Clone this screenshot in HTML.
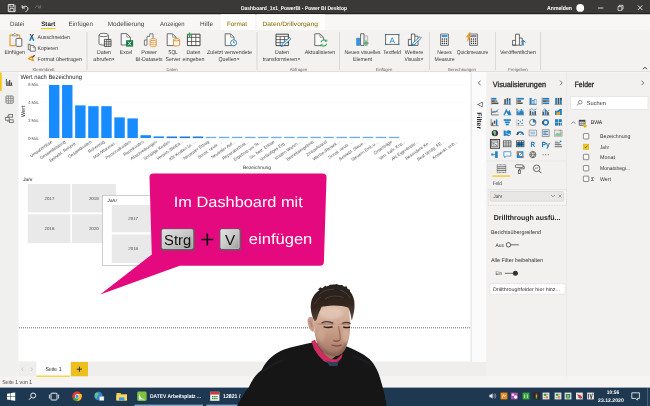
<!DOCTYPE html>
<html lang="de">
<head>
<meta charset="utf-8">
<title>Dashboard_1x1_PowerBI - Power BI Desktop</title>
<style>
html,body{margin:0;padding:0;background:#fff;overflow:hidden}
#screen{position:relative;width:650px;height:406px;overflow:hidden;background:#fff}
#screen svg{position:absolute;left:0;top:0;display:block;font-family:"Liberation Sans", sans-serif;filter:blur(0.35px)}
</style>
</head>
<body>
<div id="screen">
<svg width="650" height="406" viewBox="0 0 650 406" text-rendering="geometricPrecision">
<defs>
<linearGradient id="tb" x1="0" y1="0" x2="0" y2="1"><stop offset="0" stop-color="#3d3c3a"/><stop offset="1" stop-color="#242322"/></linearGradient>
<linearGradient id="key" x1="0" y1="0" x2="1" y2="1"><stop offset="0" stop-color="#e4e4e4"/><stop offset="0.55" stop-color="#c6c6c6"/><stop offset="1" stop-color="#9c9c9c"/></linearGradient>
</defs>
<rect x="0.00" y="0.00" width="650.00" height="406.00" fill="#ffffff" />
<rect x="0.00" y="0.00" width="650.00" height="14.30" fill="#3a3938" />
<rect x="0.00" y="13.30" width="650.00" height="1.10" fill="#161616" />
<rect x="0.00" y="14.40" width="650.00" height="15.60" fill="#f8f7f6" />
<rect x="0.00" y="30.00" width="650.00" height="42.00" fill="#f3f2f1" />
<rect x="221.00" y="14.30" width="34.00" height="15.70" fill="#fdfdfb" />
<rect x="257.00" y="14.30" width="68.00" height="15.70" fill="#fdfdfb" />
<line x1="0.00" y1="71.60" x2="650.00" y2="71.60" stroke="#d4d3d2" stroke-width="0.7" />
<rect x="0.00" y="72.30" width="18.50" height="315.00" fill="#f0f0ef" />
<rect x="0.00" y="72.50" width="1.70" height="18.50" fill="#f2c811" />
<rect x="18.50" y="361.50" width="468.00" height="15.30" fill="#efeeed" />
<rect x="0.00" y="376.50" width="650.00" height="11.20" fill="#f5f4f3" />
<rect x="470.60" y="72.30" width="1.20" height="289.50" fill="#e3e2e1" />
<rect x="471.80" y="72.30" width="14.40" height="289.50" fill="#fbfbfb" />
<rect x="486.20" y="72.30" width="80.00" height="304.20" fill="#f2f1f0" />
<rect x="566.20" y="72.30" width="1.40" height="304.20" fill="#e6e5e4" />
<rect x="567.60" y="72.30" width="82.40" height="304.20" fill="#f2f1f0" />
<rect x="0.00" y="387.60" width="650.00" height="18.40" fill="#1d3850" />
<g fill="none" stroke="#f2f2f2" stroke-width="0.8">
<path d="M8.300 4.500h5.700l1.100 1.100v6h-6.800z" stroke-width="0.900"/><path d="M10 4.600v2.300h3.600v-2.300M10 11.200v-2.600h3.800v2.600"/>
<path d="M22.200 5.300v2.700h2.700" stroke-width="1"/><path d="M22.600 7.600c1.600-2 4.800-1.800 5.300 0.600c0.300 1.600-0.800 2.800-2.400 3.400" stroke-width="1"/>
</g>
<g fill="none" stroke="#777" stroke-width="0.8"><path d="M40.6 5.2v2.6h-2.6"/><path d="M40.4 7.6c-1.2-2.3-4.6-2.2-5 0.3"/></g>
<text x="241.00" y="9.69" font-size="5.6" fill="#ffffff" font-weight="bold" textLength="106.00" lengthAdjust="spacingAndGlyphs" >Dashboard_1x1_PowerBI - Power BI Desktop</text>
<text x="547.00" y="9.96" font-size="5.8" fill="#ffffff" font-weight="bold" textLength="25.00" lengthAdjust="spacingAndGlyphs" >Anmelden</text>
<circle cx="580.2" cy="7.9" r="3.9" fill="#ffffff"/>
<line x1="598.00" y1="8.00" x2="603.40" y2="8.00" stroke="#e8e8e8" stroke-width="0.9" />
<path d="M618 6.6h3.8v3.8h-3.8zM619.2 6.4v-1.1h3.8v3.8h-1.1" fill="none" stroke="#e8e8e8" stroke-width="0.8"/>
<path d="M637.8 5.4l4.6 4.6M642.4 5.4l-4.6 4.6" stroke="#f0f0f0" stroke-width="0.9" fill="none"/>
<text x="10.00" y="25.84" font-size="6.3" fill="#444" textLength="14.30" lengthAdjust="spacingAndGlyphs" >Datei</text>
<text x="41.20" y="25.84" font-size="6.3" fill="#222" font-weight="bold" textLength="14.20" lengthAdjust="spacingAndGlyphs" >Start</text>
<text x="68.60" y="25.84" font-size="6.3" fill="#444" textLength="24.40" lengthAdjust="spacingAndGlyphs" >Einfügen</text>
<text x="107.80" y="25.84" font-size="6.3" fill="#444" textLength="36.50" lengthAdjust="spacingAndGlyphs" >Modellierung</text>
<text x="160.00" y="25.84" font-size="6.3" fill="#444" textLength="24.60" lengthAdjust="spacingAndGlyphs" >Anzeigen</text>
<text x="200.00" y="25.84" font-size="6.3" fill="#444" textLength="13.00" lengthAdjust="spacingAndGlyphs" >Hilfe</text>
<text x="227.00" y="25.84" font-size="6.3" fill="#8a6a00" textLength="20.00" lengthAdjust="spacingAndGlyphs" >Format</text>
<text x="262.50" y="25.84" font-size="6.3" fill="#8a6a00" textLength="55.50" lengthAdjust="spacingAndGlyphs" >Daten/Drillvorgang</text>
<rect x="41.00" y="28.00" width="14.60" height="1.10" fill="#f2c811" />
<line x1="87.00" y1="32.00" x2="87.00" y2="70.00" stroke="#cfcecd" stroke-width="0.7" />
<line x1="257.00" y1="32.00" x2="257.00" y2="70.00" stroke="#cfcecd" stroke-width="0.7" />
<line x1="339.50" y1="32.00" x2="339.50" y2="70.00" stroke="#cfcecd" stroke-width="0.7" />
<line x1="429.50" y1="32.00" x2="429.50" y2="70.00" stroke="#cfcecd" stroke-width="0.7" />
<line x1="495.50" y1="32.00" x2="495.50" y2="70.00" stroke="#cfcecd" stroke-width="0.7" />
<line x1="540.60" y1="32.00" x2="540.60" y2="70.00" stroke="#cfcecd" stroke-width="0.7" />
<text x="43.50" y="70.56" font-size="4.4" fill="#666" text-anchor="middle" textLength="22.00" lengthAdjust="spacingAndGlyphs" >Klemmbrett</text>
<text x="172.00" y="70.56" font-size="4.4" fill="#666" text-anchor="middle" textLength="11.00" lengthAdjust="spacingAndGlyphs" >Daten</text>
<text x="298.50" y="70.56" font-size="4.4" fill="#666" text-anchor="middle" textLength="17.50" lengthAdjust="spacingAndGlyphs" >Abfragen</text>
<text x="384.00" y="70.56" font-size="4.4" fill="#666" text-anchor="middle" textLength="16.50" lengthAdjust="spacingAndGlyphs" >Einfügen</text>
<text x="462.00" y="70.56" font-size="4.4" fill="#666" text-anchor="middle" textLength="28.00" lengthAdjust="spacingAndGlyphs" >Berechnungen</text>
<text x="518.00" y="70.56" font-size="4.4" fill="#666" text-anchor="middle" textLength="19.50" lengthAdjust="spacingAndGlyphs" >Freigeben</text>
<text x="14.70" y="53.99" font-size="5.6" fill="#3a3a3a" text-anchor="middle" textLength="20.50" lengthAdjust="spacingAndGlyphs" >Einfügen</text>
<text x="37.50" y="39.19" font-size="5.6" fill="#3a3a3a" textLength="32.50" lengthAdjust="spacingAndGlyphs" >Ausschneiden</text>
<text x="37.50" y="50.19" font-size="5.6" fill="#3a3a3a" textLength="20.50" lengthAdjust="spacingAndGlyphs" >Kopieren</text>
<text x="37.50" y="61.19" font-size="5.6" fill="#3a3a3a" textLength="44.50" lengthAdjust="spacingAndGlyphs" >Format übertragen</text>
<text x="104.00" y="53.79" font-size="5.6" fill="#3a3a3a" text-anchor="middle" textLength="14.00" lengthAdjust="spacingAndGlyphs" >Daten</text>
<text x="102.60" y="60.99" font-size="5.6" fill="#3a3a3a" text-anchor="middle" textLength="18.50" lengthAdjust="spacingAndGlyphs" >abrufen</text>
<text x="126.00" y="53.79" font-size="5.6" fill="#3a3a3a" text-anchor="middle" textLength="12.50" lengthAdjust="spacingAndGlyphs" >Excel</text>
<text x="149.00" y="53.79" font-size="5.6" fill="#3a3a3a" text-anchor="middle" textLength="15.50" lengthAdjust="spacingAndGlyphs" >Power</text>
<text x="149.00" y="60.99" font-size="5.6" fill="#3a3a3a" text-anchor="middle" textLength="27.00" lengthAdjust="spacingAndGlyphs" >BI-Datasets</text>
<text x="173.00" y="53.79" font-size="5.6" fill="#3a3a3a" text-anchor="middle" textLength="9.50" lengthAdjust="spacingAndGlyphs" >SQL</text>
<text x="173.00" y="60.99" font-size="5.6" fill="#3a3a3a" text-anchor="middle" textLength="15.00" lengthAdjust="spacingAndGlyphs" >Server</text>
<text x="193.50" y="53.79" font-size="5.6" fill="#3a3a3a" text-anchor="middle" textLength="14.00" lengthAdjust="spacingAndGlyphs" >Daten</text>
<text x="193.50" y="60.99" font-size="5.6" fill="#3a3a3a" text-anchor="middle" textLength="22.00" lengthAdjust="spacingAndGlyphs" >eingeben</text>
<text x="229.50" y="53.79" font-size="5.6" fill="#3a3a3a" text-anchor="middle" textLength="45.00" lengthAdjust="spacingAndGlyphs" >Zuletzt verwendete</text>
<text x="227.50" y="60.99" font-size="5.6" fill="#3a3a3a" text-anchor="middle" textLength="18.00" lengthAdjust="spacingAndGlyphs" >Quellen</text>
<text x="282.00" y="53.79" font-size="5.6" fill="#3a3a3a" text-anchor="middle" textLength="14.00" lengthAdjust="spacingAndGlyphs" >Daten</text>
<text x="280.00" y="60.99" font-size="5.6" fill="#3a3a3a" text-anchor="middle" textLength="34.50" lengthAdjust="spacingAndGlyphs" >transformieren</text>
<text x="320.00" y="53.79" font-size="5.6" fill="#3a3a3a" text-anchor="middle" textLength="30.50" lengthAdjust="spacingAndGlyphs" >Aktualisieren</text>
<text x="362.60" y="53.79" font-size="5.6" fill="#3a3a3a" text-anchor="middle" textLength="36.00" lengthAdjust="spacingAndGlyphs" >Neues visuelles</text>
<text x="362.50" y="60.99" font-size="5.6" fill="#3a3a3a" text-anchor="middle" textLength="19.00" lengthAdjust="spacingAndGlyphs" >Element</text>
<text x="392.00" y="53.79" font-size="5.6" fill="#3a3a3a" text-anchor="middle" textLength="18.00" lengthAdjust="spacingAndGlyphs" >Textfeld</text>
<text x="414.00" y="53.79" font-size="5.6" fill="#3a3a3a" text-anchor="middle" textLength="18.30" lengthAdjust="spacingAndGlyphs" >Weitere</text>
<text x="412.40" y="60.99" font-size="5.6" fill="#3a3a3a" text-anchor="middle" textLength="16.00" lengthAdjust="spacingAndGlyphs" >Visuals</text>
<text x="444.40" y="53.79" font-size="5.6" fill="#3a3a3a" text-anchor="middle" textLength="14.50" lengthAdjust="spacingAndGlyphs" >Neues</text>
<text x="444.60" y="60.99" font-size="5.6" fill="#3a3a3a" text-anchor="middle" textLength="20.00" lengthAdjust="spacingAndGlyphs" >Measure</text>
<text x="472.50" y="53.79" font-size="5.6" fill="#3a3a3a" text-anchor="middle" textLength="31.50" lengthAdjust="spacingAndGlyphs" >Quickmeasure</text>
<text x="518.00" y="53.79" font-size="5.6" fill="#3a3a3a" text-anchor="middle" textLength="36.00" lengthAdjust="spacingAndGlyphs" >Veröffentlichen</text>
<path d="M111.9 58.6h2.6l-1.3 1.5z" fill="#333"/>
<path d="M236.89999999999998 58.6h2.6l-1.3 1.5z" fill="#333"/>
<path d="M297.7 58.6h2.6l-1.3 1.5z" fill="#333"/>
<path d="M420.7 58.6h2.6l-1.3 1.5z" fill="#333"/>
<path d="M643 69.2l2-2l2 2" fill="none" stroke="#222" stroke-width="0.9"/>
<g fill="none" stroke-width="0.9" stroke-linejoin="round">
<path d="M12.6 35.2h-2.6v10.5h5.6M17.2 35.2h2.4v2.6" stroke="#e8a126" stroke-width="1.2"/>
<path d="M12.4 35.8v-1.3h1.3l1.2-1.3l1.2 1.3h1.4v1.3z" stroke="#777" fill="#f4f4f4" stroke-width="0.7"/>
<rect x="16" y="38.3" width="5.8" height="8" rx="0.8" stroke="#555" fill="#fdfdfd"/>
<path d="M30.100 34l2.400 4M33.400 34l-2.400 4" stroke="#2a2a2a" stroke-width="1"/>
<path d="M31.200 37.600l-1.200 2.600M32.300 37.600l1.200 2.600" stroke="#1e7fc4" stroke-width="1.500" stroke-linecap="round"/>
<path d="M30.2 45.6v-1.4h-1.9v5.6h1.9" stroke="#5c5c5c" stroke-width="0.8"/><path d="M30.3 45.4h3l2 2v3.8h-5z" stroke="#5c5c5c" fill="#fafafa" stroke-width="0.8"/><path d="M33.2 45.6v2h2" stroke="#5c5c5c" stroke-width="0.6"/>
<path d="M28.4 58.8l3.6-2.6l1.4 4.6z" stroke="#e8971e" stroke-width="1.1" fill="#f7d9a6"/><path d="M32.6 57.4l2-2.2" stroke="#333" stroke-width="1.2"/>
<path d="M99 35v8.6c0 2 9.4 2 9.4 0v-8.600" stroke="#5c5c5c" fill="#fbfbfb"/><ellipse cx="103.7" cy="35" rx="4.7" ry="1.7" stroke="#5c5c5c" fill="#fbfbfb"/>
<rect x="104.4" y="39.4" width="6.6" height="7" fill="#f4f4f4" stroke="#333" stroke-width="0.8"/><path d="M106.6 39.4v7M108.8 39.4v7M104.4 41.6h6.6M104.4 44h6.6" stroke="#333" stroke-width="0.6"/>
<path d="M121.2 33.6h5.6l3.600 3.6v7.800h-9.200z" stroke="#5c5c5c" fill="#fbfbfb"/><path d="M126.8 33.8v3.400h3.400" stroke="#5c5c5c" stroke-width="0.6"/>
<rect x="126.100" y="40.200" width="7" height="6.400" fill="#107c41" stroke="none"/><path d="M128 41.600l3.200 3.800M131.200 41.600l-3.200 3.800" stroke="#fff" stroke-width="0.9"/>
<path d="M144.4 45.200v-5.200h2.600v5.200zM147 40v-3.600h2.800v-2.600h3.200v4.600" stroke="#5c5c5c" stroke-width="0.8" fill="#fbfbfb"/>
<path d="M150.200 39.600v6c0 1.300 6 1.300 6 0v-6" stroke="#d88a2a" fill="#fff6e8" stroke-width="0.8"/><ellipse cx="153.200" cy="39.600" rx="3" ry="1" stroke="#d88a2a" fill="#fff6e8" stroke-width="0.8"/><path d="M150.200 41.800c0 1.200 6 1.200 6 0M150.200 43.800c0 1.200 6 1.200 6 0" stroke="#d88a2a" stroke-width="0.7"/>
<path d="M167.200 33.800h5.400l3.400 3.400v8.400h-8.800z" stroke="#5c5c5c" fill="#fbfbfb"/><path d="M172.600 34v3.200h3.200" stroke="#5c5c5c" stroke-width="0.6"/>
<path d="M173.400 39.800v5.200c0 1.300 6.200 1.300 6.200 0v-5.200" stroke="#d88a2a" fill="#fff6e8" stroke-width="0.9"/><ellipse cx="176.500" cy="39.800" rx="3.100" ry="1.100" stroke="#d88a2a" fill="#fff6e8" stroke-width="0.9"/>
<rect x="187.400" y="34.200" width="12.600" height="11.400" stroke="#333" fill="#fbfbfb"/><path d="M187.400 37.400h12.600M187.400 41.500h12.600M191.600 34.200v11.400M195.800 34.200v11.400" stroke="#333" stroke-width="0.7"/>
<path d="M189.600 32.400v5M187.100 34.900h5" stroke="#3aa55d" stroke-width="1.2"/>
<path d="M225.200 33.800h5.400l3.400 3.400v8.400h-8.800z" stroke="#5c5c5c" fill="#fbfbfb"/><path d="M230.600 34v3.200h3.200" stroke="#5c5c5c" stroke-width="0.6"/>
<circle cx="233.600" cy="42.800" r="3" stroke="#1e7fc4" fill="#fff" stroke-width="0.9"/><path d="M233.600 41v1.900h1.500" stroke="#333" stroke-width="0.6"/>
<rect x="276" y="34.200" width="12.400" height="11.400" stroke="#333" fill="#fbfbfb"/><path d="M276 36.400h12.400M276 39.600h12.400M276 42.600h12.400M280.200 36.400v9.200M284.400 36.400v9.200" stroke="#333" stroke-width="0.7"/>
<path d="M289.600 37.400l1.400 1.400l-7.600 7l-2.200 0.800l0.800-2.200z" stroke="#1e7fc4" fill="#fff" stroke-width="0.9"/><path d="M281.200 46.600l0.800-2.200l1.400 1.400z" fill="#1e7fc4" stroke="none"/>
<path d="M314.800 33.800h5.200l3.400 3.400v8.400h-8.600z" stroke="#5c5c5c" fill="#fbfbfb"/><path d="M320 34v3.200h3.200" stroke="#5c5c5c" stroke-width="0.6"/>
<circle cx="323.800" cy="43" r="3.300" fill="#f1f0ef" stroke="none"/><path d="M321 42.200a3 3 0 0 1 5.200-1.200M326.600 43.800a3 3 0 0 1-5.200 1.200" stroke="#2ea35a" stroke-width="1.100"/><path d="M326.800 39.600v1.800h-1.800M320.800 46.400v-1.800h1.800" stroke="#2ea35a" stroke-width="0.8"/>
<rect x="356.600" y="38.200" width="3.200" height="7.200" fill="#3a96dd" stroke="#1e7fc4" stroke-width="0.6"/><rect x="360.600" y="33.800" width="3.400" height="11.600" stroke="#444" fill="#fbfbfb" stroke-width="0.8"/><rect x="364.600" y="35.800" width="3" height="9.600" stroke="#999" fill="#e9e9e9" stroke-width="0.6"/>
<path d="M366 40.600v5M363.500 43.100h5" stroke="#3aa55d" stroke-width="1.100"/>
<rect x="385.600" y="34.600" width="13.200" height="9.800" stroke="#444" fill="#fbfbfb" stroke-width="0.8"/>
<g fill="#1e7fc4" stroke="none"><circle cx="385.600" cy="34.600" r="0.800"/><circle cx="398.800" cy="34.600" r="0.800"/><circle cx="385.600" cy="44.400" r="0.800"/><circle cx="398.800" cy="44.400" r="0.800"/></g>
<path d="M408.400 45.400v-6h3v6zM411.400 39.400v-5.400h3.400v11.400M414.800 36.200h3.200v9.200h-9.600" stroke="#444" fill="#fbfbfb" stroke-width="0.8"/>
<path d="M420 36.600l1.400 1.400l-7.400 7l-2.200 0.800l0.800-2.200z" stroke="#1e7fc4" fill="#fff" stroke-width="0.9"/><path d="M411.800 45.800l0.800-2.200l1.400 1.400z" fill="#1e7fc4" stroke="none"/>
<rect x="440.6" y="34" width="7.800" height="11.400" stroke="#555" fill="#fbfbfb" stroke-width="0.8"/>
<g fill="#333" stroke="none"><rect x="441.70" y="38.40" width="1.300" height="1.300"/><rect x="441.70" y="40.60" width="1.300" height="1.300"/><rect x="441.70" y="42.80" width="1.300" height="1.300"/><rect x="443.80" y="38.40" width="1.300" height="1.300"/><rect x="443.80" y="40.60" width="1.300" height="1.300"/><rect x="443.80" y="42.80" width="1.300" height="1.300"/><rect x="445.90" y="38.40" width="1.300" height="1.300"/><rect x="445.90" y="40.60" width="1.300" height="1.300"/><rect x="445.90" y="42.80" width="1.300" height="1.300"/></g>
<rect x="441.600" y="35" width="5.800" height="2.200" fill="#3a96dd" stroke="none"/>
<rect x="469.6" y="34" width="7.800" height="11.400" stroke="#555" fill="#fbfbfb" stroke-width="0.8"/>
<g fill="#333" stroke="none"><rect x="470.70" y="38.40" width="1.300" height="1.300"/><rect x="470.70" y="40.60" width="1.300" height="1.300"/><rect x="470.70" y="42.80" width="1.300" height="1.300"/><rect x="472.80" y="38.40" width="1.300" height="1.300"/><rect x="472.80" y="40.60" width="1.300" height="1.300"/><rect x="472.80" y="42.80" width="1.300" height="1.300"/><rect x="474.90" y="38.40" width="1.300" height="1.300"/><rect x="474.90" y="40.60" width="1.300" height="1.300"/><rect x="474.90" y="42.80" width="1.300" height="1.300"/></g>
<rect x="470.600" y="35" width="5.800" height="2.200" fill="#888" stroke="none"/>
<path d="M469.400 32.600l-3 4.600h2l-1.400 4.400l4-5.600h-2.200l1.600-3.400z" fill="#f0a030" stroke="#e08a10" stroke-width="0.4"/>
<path d="M512.600 45.200v-4.800h3v4.800zM515.600 40.400v-6.200h3.800v11M519.400 38h2.800v7.200h-9.600" stroke="#444" fill="#fbfbfb" stroke-width="0.8"/>
<path d="M523.200 45.600v-5M521.200 42.400l2-2.200l2 2.200" stroke="#1e7fc4" stroke-width="1" fill="none"/>
</g>
<text x="392.20" y="42.64" font-size="8" fill="#1e7fc4" text-anchor="middle" >A</text>
<g fill="none" stroke="#3a3a3a" stroke-width="0.8">
<path d="M6.400 79v6.400h6"/><path d="M8 85v-3.400M9.700 85v-5M11.400 85v-2.600" stroke-width="1.100"/>
<rect x="6" y="96" width="7.200" height="7.200" rx="0.500" stroke="#666"/><path d="M6 98.400h7.200M6 100.800h7.200M8.400 96v7.200M10.800 96v7.200" stroke="#666" stroke-width="0.600"/>
<rect x="8.800" y="114.400" width="3.800" height="2.800" stroke="#666"/><rect x="5.600" y="117.400" width="3.600" height="2.800" stroke="#666"/><rect x="9.600" y="119.800" width="3.600" height="2.800" stroke="#666"/><path d="M7.400 117.400v-1.600h1.400M7.400 120.200v1.200h2.200" stroke="#666" stroke-width="0.600"/>
</g>
<text x="20.40" y="79.24" font-size="6.3" fill="#252423" textLength="61.60" lengthAdjust="spacingAndGlyphs" >Wert nach Bezeichnung</text>
<text x="28.20" y="86.40" font-size="4.5" fill="#555" textLength="11.20" lengthAdjust="spacingAndGlyphs" >6 Mio.</text>
<line x1="41.00" y1="84.80" x2="466.00" y2="84.80" stroke="#efefef" stroke-width="0.5" stroke-dasharray="0.8 1.2"/>
<text x="28.20" y="104.10" font-size="4.5" fill="#555" textLength="11.20" lengthAdjust="spacingAndGlyphs" >4 Mio.</text>
<line x1="41.00" y1="102.50" x2="466.00" y2="102.50" stroke="#efefef" stroke-width="0.5" stroke-dasharray="0.8 1.2"/>
<text x="28.20" y="121.80" font-size="4.5" fill="#555" textLength="11.20" lengthAdjust="spacingAndGlyphs" >2 Mio.</text>
<line x1="41.00" y1="120.20" x2="466.00" y2="120.20" stroke="#efefef" stroke-width="0.5" stroke-dasharray="0.8 1.2"/>
<text x="28.20" y="139.60" font-size="4.5" fill="#555" textLength="11.20" lengthAdjust="spacingAndGlyphs" >0 Mio.</text>
<line x1="41.00" y1="138.00" x2="466.00" y2="138.00" stroke="#efefef" stroke-width="0.5" stroke-dasharray="0.8 1.2"/>
<text transform="translate(25.2,111.300) rotate(-90)" font-size="5.600" fill="#2a2a2a" text-anchor="middle" textLength="11.400" lengthAdjust="spacingAndGlyphs">Wert</text>
<rect x="49.00" y="85.00" width="10.40" height="53.00" fill="#178bff" />
<rect x="62.07" y="85.00" width="10.40" height="53.00" fill="#178bff" />
<rect x="75.14" y="105.40" width="10.40" height="32.60" fill="#178bff" />
<rect x="88.21" y="106.20" width="10.40" height="31.80" fill="#178bff" />
<rect x="101.28" y="106.20" width="10.40" height="31.80" fill="#178bff" />
<rect x="114.35" y="117.40" width="10.40" height="20.60" fill="#178bff" />
<rect x="127.42" y="118.40" width="10.40" height="19.60" fill="#178bff" />
<rect x="140.49" y="135.20" width="10.40" height="2.80" fill="#178bff" />
<rect x="153.56" y="136.40" width="10.40" height="1.60" fill="#178bff" />
<rect x="166.63" y="136.50" width="10.40" height="1.60" fill="#1f7ae0" />
<rect x="179.70" y="136.50" width="10.40" height="1.60" fill="#1f7ae0" />
<rect x="192.77" y="136.50" width="10.40" height="1.60" fill="#1f7ae0" />
<rect x="205.84" y="136.80" width="10.40" height="1.30" fill="#6aaef0" />
<rect x="218.91" y="136.80" width="10.40" height="1.30" fill="#6aaef0" />
<rect x="231.98" y="136.80" width="10.40" height="1.30" fill="#6aaef0" />
<rect x="245.05" y="136.80" width="10.40" height="1.30" fill="#6aaef0" />
<rect x="258.12" y="136.80" width="10.40" height="1.30" fill="#6aaef0" />
<rect x="271.19" y="136.80" width="10.40" height="1.30" fill="#6aaef0" />
<rect x="284.26" y="136.80" width="10.40" height="1.30" fill="#6aaef0" />
<rect x="297.33" y="136.80" width="10.40" height="1.30" fill="#6aaef0" />
<rect x="310.40" y="136.80" width="10.40" height="1.30" fill="#6aaef0" />
<rect x="323.47" y="136.80" width="10.40" height="1.30" fill="#6aaef0" />
<rect x="336.54" y="136.80" width="10.40" height="1.30" fill="#6aaef0" />
<rect x="349.61" y="136.80" width="10.40" height="1.30" fill="#6aaef0" />
<rect x="362.68" y="136.80" width="10.40" height="1.30" fill="#6aaef0" />
<rect x="375.75" y="136.80" width="10.40" height="1.30" fill="#6aaef0" />
<rect x="388.82" y="136.80" width="10.40" height="1.30" fill="#6aaef0" />
<text transform="translate(52.7,142.400) rotate(-35)" font-size="4.300" fill="#505050" text-anchor="end">Umsatzerlöse</text>
<text transform="translate(65.8,142.400) rotate(-35)" font-size="4.300" fill="#505050" text-anchor="end">Gesamtleistung</text>
<text transform="translate(78.8,142.400) rotate(-35)" font-size="4.300" fill="#505050" text-anchor="end">Betriebl. Rohertr...</text>
<text transform="translate(91.9,142.400) rotate(-35)" font-size="4.300" fill="#505050" text-anchor="end">Gesamtkosten</text>
<text transform="translate(105.0,142.400) rotate(-35)" font-size="4.300" fill="#505050" text-anchor="end">Rohertrag</text>
<text transform="translate(118.0,142.400) rotate(-35)" font-size="4.300" fill="#505050" text-anchor="end">Mat./Warenei...</text>
<text transform="translate(131.1,142.400) rotate(-35)" font-size="4.300" fill="#505050" text-anchor="end">Personalkosten</text>
<text transform="translate(144.2,142.400) rotate(-35)" font-size="4.300" fill="#505050" text-anchor="end">Raumkosten</text>
<text transform="translate(157.3,142.400) rotate(-35)" font-size="4.300" fill="#505050" text-anchor="end">Abschreibungen</text>
<text transform="translate(170.3,142.400) rotate(-35)" font-size="4.300" fill="#505050" text-anchor="end">Sonstige Kosten</text>
<text transform="translate(183.4,142.400) rotate(-35)" font-size="4.300" fill="#505050" text-anchor="end">Versich./Beiträ...</text>
<text transform="translate(196.5,142.400) rotate(-35)" font-size="4.300" fill="#505050" text-anchor="end">Kfz-Kosten (o. ...</text>
<text transform="translate(209.5,142.400) rotate(-35)" font-size="4.300" fill="#505050" text-anchor="end">Neutraler Ertrag</text>
<text transform="translate(222.6,142.400) rotate(-35)" font-size="4.300" fill="#505050" text-anchor="end">Sonst. neutr. ...</text>
<text transform="translate(235.7,142.400) rotate(-35)" font-size="4.300" fill="#505050" text-anchor="end">Neutraler Auf...</text>
<text transform="translate(248.8,142.400) rotate(-35)" font-size="4.300" fill="#505050" text-anchor="end">Reparatur/Inst...</text>
<text transform="translate(261.8,142.400) rotate(-35)" font-size="4.300" fill="#505050" text-anchor="end">Ergebnis vor St...</text>
<text transform="translate(274.9,142.400) rotate(-35)" font-size="4.300" fill="#505050" text-anchor="end">So. betr. Erlöse</text>
<text transform="translate(288.0,142.400) rotate(-35)" font-size="4.300" fill="#505050" text-anchor="end">Vorläufiges Erg...</text>
<text transform="translate(301.0,142.400) rotate(-35)" font-size="4.300" fill="#505050" text-anchor="end">Kosten Waren...</text>
<text transform="translate(314.1,142.400) rotate(-35)" font-size="4.300" fill="#505050" text-anchor="end">Betriebsergebnis</text>
<text transform="translate(327.2,142.400) rotate(-35)" font-size="4.300" fill="#505050" text-anchor="end">Zinsaufwand</text>
<text transform="translate(340.2,142.400) rotate(-35)" font-size="4.300" fill="#505050" text-anchor="end">Werbe-/Reisek...</text>
<text transform="translate(353.3,142.400) rotate(-35)" font-size="4.300" fill="#505050" text-anchor="end">Sonst. neutr. ...</text>
<text transform="translate(366.4,142.400) rotate(-35)" font-size="4.300" fill="#505050" text-anchor="end">Betriebl. Steue...</text>
<text transform="translate(379.4,142.400) rotate(-35)" font-size="4.300" fill="#505050" text-anchor="end">Steuern Eink.u....</text>
<text transform="translate(392.5,142.400) rotate(-35)" font-size="4.300" fill="#505050" text-anchor="end">Zinserträge</text>
<text transform="translate(405.6,142.400) rotate(-35)" font-size="4.300" fill="#505050" text-anchor="end">Verr. kalk. Kos...</text>
<text transform="translate(418.7,142.400) rotate(-35)" font-size="4.300" fill="#505050" text-anchor="end">Akt.Eigenleistu...</text>
<text transform="translate(431.7,142.400) rotate(-35)" font-size="4.300" fill="#505050" text-anchor="end">Besondere Ko...</text>
<text transform="translate(444.8,142.400) rotate(-35)" font-size="4.300" fill="#505050" text-anchor="end">Best.Verdg. FE...</text>
<text transform="translate(457.9,142.400) rotate(-35)" font-size="4.300" fill="#505050" text-anchor="end">Kostenkl. unb...</text>
<text x="257.00" y="169.00" font-size="4.8" fill="#333" text-anchor="middle" textLength="28.00" lengthAdjust="spacingAndGlyphs" >Bezeichnung</text>
<text x="23.00" y="181.43" font-size="4.6" fill="#222" font-style="italic" textLength="9.60" lengthAdjust="spacingAndGlyphs" >Jahr</text>
<rect x="27.80" y="184.00" width="42.60" height="28.40" fill="#e9e9e9" />
<rect x="72.00" y="184.00" width="44.00" height="28.40" fill="#e9e9e9" />
<rect x="27.80" y="214.30" width="42.60" height="28.70" fill="#e9e9e9" />
<rect x="72.00" y="214.30" width="44.00" height="28.70" fill="#e9e9e9" />
<text x="49.50" y="200.36" font-size="4.4" fill="#4a4a4a" text-anchor="middle" >2017</text>
<text x="93.80" y="200.36" font-size="4.4" fill="#4a4a4a" text-anchor="middle" >2019</text>
<text x="49.50" y="230.16" font-size="4.4" fill="#4a4a4a" text-anchor="middle" >2018</text>
<text x="93.80" y="230.16" font-size="4.4" fill="#4a4a4a" text-anchor="middle" >2020</text>
<rect x="102.400" y="195.400" width="60" height="70" fill="#ffffff" stroke="#bdbdbd" stroke-width="0.700"/>
<text x="107.30" y="201.63" font-size="4.6" fill="#222" font-style="italic" textLength="9.80" lengthAdjust="spacingAndGlyphs" >Jahr</text>
<rect x="111.80" y="205.00" width="45.00" height="27.30" fill="#e9e9e9" />
<rect x="111.80" y="234.50" width="45.00" height="28.50" fill="#e9e9e9" />
<text x="133.20" y="220.36" font-size="4.4" fill="#4a4a4a" text-anchor="middle" >2017</text>
<text x="133.20" y="250.36" font-size="4.4" fill="#4a4a4a" text-anchor="middle" >2018</text>
<line x1="19.00" y1="327.80" x2="470.50" y2="327.80" stroke="#6a6a6a" stroke-width="1" stroke-dasharray="1 1"/>
<path d="M153.400 173.400L322.600 173.600Q326.700 173.600 326.500 177.600L323.900 261.800Q323.800 265.800 319.800 265.800L179.700 265.800L100.200 294.600L151.800 254.500L149.500 177.400Q149.400 173.400 153.400 173.400Z" fill="#e5097f"/>
<text x="173.80" y="206.52" font-size="15" fill="#ffffff" textLength="129.00" lengthAdjust="spacingAndGlyphs" >Im Dashboard mit</text>
<text x="248.80" y="243.92" font-size="15" fill="#ffffff" textLength="63.50" lengthAdjust="spacingAndGlyphs" >einfügen</text>
<rect x="161" y="228.500" width="33.6" height="21.900" rx="1.500" fill="#5e5e5e"/>
<rect x="162.1" y="229.500" width="30.700000000000003" height="19" rx="1.200" fill="url(#key)" stroke="#ededed" stroke-width="0.500"/>
<text x="177.60" y="244.65" font-size="14.5" fill="#111" text-anchor="middle" textLength="27.00" lengthAdjust="spacingAndGlyphs" >Strg</text>
<rect x="219.6" y="228.500" width="21.4" height="21.900" rx="1.500" fill="#5e5e5e"/>
<rect x="220.7" y="229.500" width="18.5" height="19" rx="1.200" fill="url(#key)" stroke="#ededed" stroke-width="0.500"/>
<text x="230.10" y="244.65" font-size="14.5" fill="#111" text-anchor="middle" textLength="10.20" lengthAdjust="spacingAndGlyphs" >V</text>
<path d="M201.300 239.500h12M207.300 233.500v12" stroke="#111" stroke-width="1.700"/>
<path d="M480.600 80.600l-2.200 2.300l2.200 2.300" fill="none" stroke="#444" stroke-width="0.800"/>
<path d="M482.400 102.200v4.600l-3.600-1.600l-0 -1.400z" fill="none" stroke="#555" stroke-width="0.700"/><path d="M478.800 104.500h-1.600" stroke="#555" stroke-width="0.700"/>
<text transform="translate(476.600,112.200) rotate(90)" font-size="6.600" font-weight="bold" fill="#252423" textLength="17" lengthAdjust="spacingAndGlyphs">Filter</text>
<text x="492.80" y="86.93" font-size="7.7" fill="#252423" textLength="53.20" lengthAdjust="spacingAndGlyphs" stroke="#252423" stroke-width="0.280">Visualisierungen</text>
<path d="M560 80.600l2.200 2.300l-2.200 2.300" fill="none" stroke="#555" stroke-width="0.800"/>
<g transform="translate(490.90,97.60)" fill="none" stroke-width="0.800"><rect x="1" y="0.300" width="4.500" height="1.800" fill="#1e7fc4"/><rect x="1" y="2.700" width="3" height="1.600" fill="#4f4f4f"/><rect x="4" y="2.700" width="2.500" height="1.600" fill="#8a8a8a"/><rect x="1" y="4.900" width="6.500" height="1.600" fill="#4f4f4f"/><path d="M0.400 0v7" stroke="#4f4f4f" stroke-width="0.600"/></g>
<g transform="translate(503.30,97.60)" fill="none" stroke-width="0.800"><rect x="1" y="1.500" width="1.600" height="5" fill="#4f4f4f"/><rect x="3.300" y="3.400" width="1.600" height="3.100" fill="#1e7fc4"/><rect x="3.300" y="0.500" width="1.600" height="2.900" fill="#4f4f4f"/><rect x="5.600" y="2.400" width="1.600" height="4.100" fill="#1e7fc4"/><rect x="5.600" y="0.800" width="1.600" height="1.600" fill="#4f4f4f"/><path d="M0.200 6.800h7.600" stroke="#4f4f4f" stroke-width="0.600"/></g>
<g transform="translate(516.30,97.60)" fill="none" stroke-width="0.800"><rect x="1" y="0.300" width="6.500" height="1.700" fill="#1e7fc4"/><rect x="1" y="2.700" width="3.800" height="1.500" fill="#4f4f4f"/><rect x="1" y="4.900" width="5.400" height="1.500" fill="#4f4f4f"/><path d="M0.400 0v7" stroke="#4f4f4f" stroke-width="0.600"/></g>
<g transform="translate(528.80,97.60)" fill="none" stroke-width="0.800"><rect x="0.800" y="0.300" width="2" height="6.200" fill="#1e7fc4"/><rect x="3.300" y="3" width="1.700" height="3.500" fill="#fff" stroke="#1e7fc4" stroke-width="0.500"/><rect x="5.600" y="1.600" width="1.700" height="4.900" fill="#fff" stroke="#1e7fc4" stroke-width="0.500"/><path d="M0.200 6.800h7.600" stroke="#4f4f4f" stroke-width="0.600"/></g>
<g transform="translate(541.70,97.60)" fill="none" stroke-width="0.800"><rect x="1" y="0.300" width="6.500" height="1.800" fill="#1e7fc4"/><rect x="1" y="2.700" width="6.500" height="1.600" fill="#4f4f4f"/><rect x="1" y="4.900" width="6.500" height="1.600" fill="#1e7fc4"/><rect x="4.500" y="2.700" width="3" height="1.600" fill="#8a8a8a"/><path d="M0.400 0v7" stroke="#4f4f4f" stroke-width="0.600"/></g>
<g transform="translate(554.40,97.60)" fill="none" stroke-width="0.800"><rect x="0.800" y="0.300" width="1.900" height="6.200" fill="#1e7fc4"/><rect x="3.300" y="0.300" width="1.700" height="6.200" fill="#4f4f4f"/><rect x="5.600" y="0.300" width="1.700" height="6.200" fill="#1e7fc4"/><rect x="5.600" y="0.300" width="1.700" height="2.400" fill="#4f4f4f"/><path d="M0.200 6.800h7.600" stroke="#4f4f4f" stroke-width="0.600"/></g>
<g transform="translate(490.90,108.30)" fill="none" stroke-width="0.800"><path d="M0.500 0v6.600h7.300" stroke="#4f4f4f" stroke-width="0.700"/><path d="M1 5l2-2.400l1.600 1.400l2.800-3" stroke="#1e7fc4" stroke-width="0.800"/><path d="M1 3l2 1.600l2-2l2.400 1.400" stroke="#4f4f4f" stroke-width="0.600"/></g>
<g transform="translate(503.30,108.30)" fill="none" stroke-width="0.800"><path d="M0.400 6.600l2.600-5.600l1.800 3l1.400-2l1.600 4.600z" fill="#1e7fc4" stroke="#1e7fc4" stroke-width="0.500"/><path d="M1.600 6.600l1.600-3l1.600 3" fill="#fff" stroke="none"/></g>
<g transform="translate(516.30,108.30)" fill="none" stroke-width="0.800"><path d="M0.500 0v6.600h7.300" stroke="#4f4f4f" stroke-width="0.600"/><path d="M0.800 6.400v-4l2 2l2-2.600l2.600 2v2.600z" fill="#1e7fc4" stroke="none"/><path d="M0.800 1l2 2.400l2-2.400l2.600 1.800" stroke="#1e7fc4" stroke-width="0.700"/></g>
<g transform="translate(528.80,108.30)" fill="none" stroke-width="0.800"><rect x="0.800" y="2.400" width="1.600" height="4.200" fill="#4f4f4f"/><rect x="3.200" y="3.400" width="1.600" height="3.200" fill="#1e7fc4"/><rect x="5.600" y="2.800" width="1.600" height="3.800" fill="#4f4f4f"/><path d="M0.600 1.800l2.400-1.400l2 1.600l2.600-1.400" stroke="#1e7fc4" stroke-width="0.700"/><path d="M0.200 6.800h7.600" stroke="#4f4f4f" stroke-width="0.600"/></g>
<g transform="translate(541.70,108.30)" fill="none" stroke-width="0.800"><rect x="0.800" y="3.400" width="1.600" height="3.200" fill="#4f4f4f"/><rect x="3" y="1.600" width="1.800" height="5" fill="#1e7fc4"/><rect x="5.400" y="3.800" width="1.800" height="2.800" fill="#4f4f4f"/><path d="M0.600 2.800l2.600-2.400l2 3l2.400-1.400" stroke="#4f4f4f" stroke-width="0.600"/><path d="M0.200 6.800h7.600" stroke="#4f4f4f" stroke-width="0.600"/></g>
<g transform="translate(554.40,108.30)" fill="none" stroke-width="0.800"><rect x="0.600" y="2.400" width="1.800" height="4.200" fill="#1e7fc4"/><rect x="5.600" y="0.600" width="1.800" height="6" fill="#1e7fc4"/><path d="M2.400 2.400l3.200 1.600v2.600h-3.200z" fill="#e8a126" stroke="none"/><path d="M2.400 2.600l3.200-2v2.600l-3.200 1z" fill="#1e7fc4" stroke="none"/><rect x="3.200" y="4" width="1.800" height="2.600" fill="#e8a126"/></g>
<g transform="translate(490.90,118.90)" fill="none" stroke-width="0.800"><rect x="0.800" y="3.600" width="1.500" height="3" fill="#4f4f4f"/><rect x="2.900" y="1.800" width="1.500" height="3" fill="#4f4f4f"/><rect x="5" y="0.500" width="1.500" height="6.100" fill="#1e7fc4"/><path d="M0.200 0v6.800h7.600" stroke="#4f4f4f" stroke-width="0.600"/></g>
<g transform="translate(503.30,118.90)" fill="none" stroke-width="0.800"><rect x="0.400" y="0.300" width="7.200" height="1.700" fill="#1e7fc4"/><rect x="1.500" y="2.600" width="5" height="1.600" fill="#1e7fc4"/><rect x="2.500" y="4.800" width="3" height="1.600" fill="#1e7fc4"/></g>
<g transform="translate(516.30,118.90)" fill="none" stroke-width="0.800"><path d="M0.500 0v6.600h7.300" stroke="#999" stroke-width="0.500"/><circle cx="2.200" cy="4.800" r="0.800" fill="#4f4f4f"/><circle cx="4" cy="2.800" r="0.700" fill="#1e7fc4"/><circle cx="5.800" cy="4.600" r="0.800" fill="#1e7fc4"/><circle cx="6.200" cy="1.200" r="0.700" fill="#4f4f4f"/><circle cx="2.200" cy="1.600" r="0.600" fill="#1e7fc4"/></g>
<g transform="translate(528.80,118.90)" fill="none" stroke-width="0.800"><circle cx="4" cy="3.500" r="3.200" stroke="#4f4f4f" stroke-width="0.700" fill="#fafafa"/><path d="M4 3.500v-3.200a3.200 3.200 0 0 1 3.200 3.200z" fill="#1e7fc4" stroke="none"/></g>
<g transform="translate(541.70,118.90)" fill="none" stroke-width="0.800"><circle cx="4" cy="3.500" r="2.500" stroke="#1e7fc4" stroke-width="1.700"/><path d="M4 1v-1M6.200 5l1 0.800" stroke="#fff" stroke-width="0.500"/><path d="M1.800 5.400a2.500 2.500 0 0 1 -0.200 -3" stroke="#4f4f4f" stroke-width="1.600"/></g>
<g transform="translate(554.40,118.90)" fill="none" stroke-width="0.800"><rect x="0.600" y="0.300" width="3" height="6.400" fill="#1e7fc4"/><rect x="4.200" y="0.300" width="3.200" height="2.800" fill="#1e7fc4"/><rect x="4.200" y="3.700" width="1.400" height="3" fill="#4f4f4f"/><rect x="6.100" y="3.700" width="1.300" height="3" fill="#1e7fc4"/><path d="M0.600 3.400h3" stroke="#fff" stroke-width="0.400"/></g>
<g transform="translate(490.90,129.60)" fill="none" stroke-width="0.800"><circle cx="4" cy="3.500" r="3.200" fill="#3b3b3b" stroke="none"/><path d="M3 1.200c1.400-0.400 2.400 0.600 2 2c-0.400 1.200 0.200 2-1 3c-1-0.600-0.600-2-1.400-2.800c-0.600-0.800-0.400-1.600 0.400-2.200z" fill="#7fc58a" stroke="none"/></g>
<g transform="translate(503.30,129.60)" fill="none" stroke-width="0.800"><path d="M0.400 0.600l2.400 0.800l2.400-0.800l2.400 0.800v3l-2 2.200l-2.600-0.600l-2.600 0.400z" fill="#1e7fc4" stroke="none"/><path d="M2.800 1.400v2.800h2.600" stroke="#fff" stroke-width="0.500"/><rect x="4.800" y="3.800" width="2.400" height="1.800" fill="#cfe3f4" stroke="#1e7fc4" stroke-width="0.300"/></g>
<g transform="translate(516.30,129.60)" fill="none" stroke-width="0.800"><path d="M1 5.400a3 3 0 0 1 6 0" stroke="#1e7fc4" stroke-width="1.500"/><path d="M1 5.400a3 3 0 0 1 1.400-2.500" stroke="#4f4f4f" stroke-width="1.500"/><path d="M4 5.400l1.800-2" stroke="#4f4f4f" stroke-width="0.600"/></g>
<g transform="translate(528.80,129.60)" fill="none" stroke-width="0.800"><rect x="0.300" y="0.500" width="7.400" height="5.800" stroke="#777" stroke-width="0.600" fill="#f6f6f6"/><rect x="1.600" y="2" width="4.800" height="2.800" fill="#9cc7ea" stroke="none"/></g>
<g transform="translate(541.70,129.60)" fill="none" stroke-width="0.800"><rect x="0.500" y="0.200" width="7" height="6.600" stroke="#777" stroke-width="0.700" fill="#e4e4e4"/><path d="M1.600 2h4.800M1.600 4.800h4.800" stroke="#1e7fc4" stroke-width="0.900"/><path d="M1.600 3.400h3" stroke="#4f4f4f" stroke-width="0.600"/></g>
<g transform="translate(554.40,129.60)" fill="none" stroke-width="0.800"><rect x="0.300" y="0.400" width="7.400" height="6.200" stroke="#888" stroke-width="0.500" fill="#e6e6e6"/><path d="M0.800 4.800l2-1.600l1.600 1l2.800-2.400v4.400h-6.400z" fill="#7fc58a" stroke="none"/><path d="M4.800 1l1 1.200l1-1.200z" fill="#d9342b" stroke="none"/></g>
<rect x="490.400" y="139.500" width="9.200" height="8.800" fill="#e0e0e0" stroke="#3a3a3a" stroke-width="0.900"/>
<g transform="translate(490.90,140.30)" fill="none" stroke-width="0.800"><rect x="0.600" y="0.600" width="6.400" height="5.600" stroke="#555" stroke-width="0.600" fill="#f2f2f2"/><path d="M0.600 2h6.400" stroke="#555" stroke-width="0.500"/><path d="M1.600 3.200h2M1.600 4.600h2" stroke="#333" stroke-width="0.600"/><path d="M4.600 4.200l1.600 1.600M5.400 4.200h-0.800v0.800" stroke="#333" stroke-width="0.500"/></g>
<g transform="translate(503.30,140.30)" fill="none" stroke-width="0.800"><rect x="0.300" y="0.500" width="7.400" height="6" stroke="#444" stroke-width="0.700" fill="#f4f4f4"/><path d="M0.300 2h7.400M2.800 0.500v6M5.300 0.500v6M0.300 3.600h7.400M0.300 5h7.400" stroke="#444" stroke-width="0.500"/></g>
<g transform="translate(516.30,140.30)" fill="none" stroke-width="0.800"><rect x="0.300" y="0.500" width="7.400" height="6" stroke="#444" stroke-width="0.700" fill="#f4f4f4"/><rect x="0.600" y="2" width="6.800" height="4.200" fill="#1e7fc4" stroke="none"/><path d="M2.800 0.500v6M5.300 0.500v6M0.300 2h7.400M0.300 4h7.400" stroke="#222" stroke-width="0.500"/></g>
<g transform="translate(554.40,140.30)" fill="none" stroke-width="0.800"><path d="M0.400 2.600h5M0.400 4.400h6.600" stroke="#555" stroke-width="0.900"/><path d="M0.300 6.400h7.400" stroke="#333" stroke-width="0.700"/><rect x="5.400" y="0.300" width="1.600" height="1.600" fill="#1e7fc4"/><path d="M0.400 1h3" stroke="#999" stroke-width="0.600"/></g>
<g transform="translate(490.90,151.10)" fill="none" stroke-width="0.800"><rect x="4.200" y="0.200" width="2.600" height="6.600" fill="#1e7fc4"/><rect x="0.400" y="2.400" width="2.200" height="2" fill="#1e7fc4"/><path d="M2.600 3.400h1.600" stroke="#1e7fc4" stroke-width="0.700"/></g>
<g transform="translate(503.30,151.10)" fill="none" stroke-width="0.800"><path d="M0.500 0.600h7v4.400h-4.600l-1.500 1.600v-1.600h-0.900z" stroke="#1e7fc4" stroke-width="0.700" fill="#f6f9fc"/></g>
<g transform="translate(516.30,151.10)" fill="none" stroke-width="0.800"><rect x="0.500" y="0.200" width="6.600" height="6.600" fill="#1e7fc4"/><rect x="2.600" y="1.600" width="3.400" height="3.400" fill="#f1f0ef"/><rect x="0.500" y="0.200" width="1.800" height="2.800" fill="#e8742a"/><rect x="5.800" y="5" width="1.600" height="1.600" fill="#e8742a"/><path d="M2.600 5l3.400-3.400" stroke="#1e7fc4" stroke-width="0.600"/></g>
<g transform="translate(528.80,151.10)" fill="none" stroke-width="0.800"><circle cx="4" cy="3.500" r="3.100" stroke="#333" stroke-width="0.700"/><path d="M4 0.400l-1.800 3.100l1.800 3.100l1.800-3.100z" stroke="#333" stroke-width="0.600"/><path d="M0.900 3.500h6.200" stroke="#333" stroke-width="0.500"/></g>
<g fill="#444"><circle cx="543.100" cy="154.700" r="0.550"/><circle cx="545.700" cy="154.700" r="0.550"/><circle cx="548.300" cy="154.700" r="0.550"/></g>
<text x="532.80" y="146.70" font-size="7.6" fill="#1a6fb5" text-anchor="middle" font-weight="bold" textLength="4.60" lengthAdjust="spacingAndGlyphs" >R</text>
<text x="545.70" y="146.70" font-size="7.6" fill="#1a6fb5" text-anchor="middle" font-weight="bold" textLength="8.40" lengthAdjust="spacingAndGlyphs" >Py</text>
<line x1="487.00" y1="161.00" x2="566.00" y2="161.00" stroke="#e2e1e0" stroke-width="0.6" />
<g fill="none" stroke="#3a3a3a" stroke-width="0.700">
<rect x="497.200" y="164.800" width="8.600" height="7.800" stroke-dasharray="0.900 0.500"/><path d="M497.200 166.800h8.600M497.200 168.700h8.600M497.200 170.600h8.600"/>
<rect x="515.400" y="164.800" width="7.600" height="2.800" rx="0.900"/><path d="M523 166.200h1.200v2.600h-4.800v1.400"/><rect x="518.500" y="170.200" width="1.800" height="3.200"/>
<circle cx="536.600" cy="168.300" r="3.300"/><path d="M539 170.800l2.400 2.400" stroke-width="0.900"/><path d="M534.600 169.400l1.400-1.800l1 1l1.400-1.800" stroke-width="0.500"/>
</g>
<rect x="492.50" y="175.40" width="17.50" height="1.30" fill="#f2c811" />
<text x="492.80" y="184.85" font-size="5.2" fill="#333" textLength="9.00" lengthAdjust="spacingAndGlyphs" >Feld</text>
<rect x="488.300" y="189.600" width="78.200" height="15.700" fill="#f6f5f4" stroke="#bcbcbc" stroke-width="0.500" stroke-dasharray="0.800 0.800"/>
<rect x="490.100" y="191.400" width="73.400" height="9.800" rx="0.800" fill="#e8e7e6" stroke="#c9c9c9" stroke-width="0.500"/>
<text x="493.60" y="197.78" font-size="5" fill="#333" textLength="8.50" lengthAdjust="spacingAndGlyphs" >Jahr</text>
<path d="M551 195l2 1.800l2-1.800" fill="none" stroke="#666" stroke-width="0.600"/><path d="M558.600 194.600l2.800 2.800M561.400 194.600l-2.800 2.800" stroke="#666" stroke-width="0.600"/>
<text x="493.80" y="219.76" font-size="7.2" fill="#252423" font-weight="bold" textLength="66.60" lengthAdjust="spacingAndGlyphs" >Drillthrough ausfü...</text>
<text x="491.00" y="233.52" font-size="5.4" fill="#333" textLength="50.00" lengthAdjust="spacingAndGlyphs" >Berichtsübergreifend</text>
<text x="495.40" y="246.55" font-size="5.2" fill="#333" textLength="8.50" lengthAdjust="spacingAndGlyphs" >Aus</text>
<line x1="510.40" y1="244.80" x2="518.80" y2="244.80" stroke="#333" stroke-width="0.7" />
<circle cx="508.500" cy="244.800" r="2.200" fill="#f6f6f6" stroke="#333" stroke-width="0.800"/>
<text x="491.00" y="261.92" font-size="5.4" fill="#333" textLength="52.00" lengthAdjust="spacingAndGlyphs" >Alle Filter beibehalten</text>
<text x="495.40" y="275.05" font-size="5.2" fill="#333" textLength="6.50" lengthAdjust="spacingAndGlyphs" >Ein</text>
<line x1="505.00" y1="273.30" x2="514.00" y2="273.30" stroke="#333" stroke-width="0.7" />
<circle cx="515.400" cy="273.300" r="2.500" fill="#333"/>
<rect x="490" y="283.800" width="75" height="10.300" fill="#ffffff" stroke="#bdbdbd" stroke-width="0.500" stroke-dasharray="0.800 0.800"/>
<text x="493.00" y="290.77" font-size="5" fill="#333" textLength="67.00" lengthAdjust="spacingAndGlyphs" >Drillthroughfelder hier hinz...</text>
<text x="574.70" y="86.53" font-size="7.7" fill="#252423" textLength="19.30" lengthAdjust="spacingAndGlyphs" stroke="#252423" stroke-width="0.280">Felder</text>
<path d="M641.600 80.600l2.200 2.300l-2.200 2.300" fill="none" stroke="#555" stroke-width="0.800"/>
<rect x="570.800" y="96.500" width="77.200" height="12.800" fill="#ffffff" stroke="#dcdcdc" stroke-width="0.600"/>
<circle cx="580.200" cy="102.200" r="1.800" fill="none" stroke="#444" stroke-width="0.600"/><path d="M578.900 103.600l-1.900 1.900" stroke="#444" stroke-width="0.700"/>
<text x="586.80" y="105.32" font-size="5.7" fill="#333" textLength="19.20" lengthAdjust="spacingAndGlyphs" >Suchen</text>
<path d="M571.400 123.700l2-2l2 2" fill="none" stroke="#444" stroke-width="0.600"/>
<rect x="579.200" y="120.200" width="5.800" height="5" fill="#fafafa" stroke="#333" stroke-width="0.700"/><rect x="579.200" y="120.200" width="5.800" height="1.400" fill="#333"/><path d="M581.200 121.600v3.600M583.200 121.600v3.600M579.200 123.400h5.800" stroke="#333" stroke-width="0.400"/>
<circle cx="585" cy="126" r="1.700" fill="#f2c811"/><path d="M584.300 126l0.600 0.600l0.900-1.100" stroke="#333" stroke-width="0.400" fill="none"/>
<text x="590.80" y="123.92" font-size="5.4" fill="#252423" textLength="11.50" lengthAdjust="spacingAndGlyphs" >BWA</text>
<rect x="583.400" y="133.60" width="5.400" height="5.400" rx="0.600" fill="#fbfbfb" stroke="#555" stroke-width="0.650"/>
<text x="600.00" y="138.18" font-size="5.3" fill="#333" textLength="30.50" lengthAdjust="spacingAndGlyphs" >Bezeichnung</text>
<rect x="583.400" y="144.10" width="5.400" height="5.400" fill="#f2c811" stroke="#c9a40c" stroke-width="0.400"/><path d="M584.600 146.80l1 1l1.800-2.100" fill="none" stroke="#333" stroke-width="0.600"/>
<text x="600.00" y="148.68" font-size="5.3" fill="#333" textLength="9.00" lengthAdjust="spacingAndGlyphs" >Jahr</text>
<rect x="583.400" y="154.30" width="5.400" height="5.400" rx="0.600" fill="#fbfbfb" stroke="#555" stroke-width="0.650"/>
<text x="600.00" y="158.88" font-size="5.3" fill="#333" textLength="15.00" lengthAdjust="spacingAndGlyphs" >Monat</text>
<rect x="583.400" y="165.50" width="5.400" height="5.400" rx="0.600" fill="#fbfbfb" stroke="#555" stroke-width="0.650"/>
<text x="600.00" y="170.08" font-size="5.3" fill="#333" textLength="30.00" lengthAdjust="spacingAndGlyphs" >Monatsbegi...</text>
<rect x="583.400" y="176.10" width="5.400" height="5.400" rx="0.600" fill="#fbfbfb" stroke="#555" stroke-width="0.650"/>
<text x="600.00" y="180.68" font-size="5.3" fill="#333" textLength="11.00" lengthAdjust="spacingAndGlyphs" >Wert</text>
<text x="591.00" y="180.55" font-size="5.2" fill="#333" font-weight="bold" >Σ</text>
<path d="M23 367.600l-1.500 1.700l1.500 1.700M31 367.600l1.500 1.700l-1.500 1.700" fill="none" stroke="#b5b5b5" stroke-width="0.700"/>
<rect x="36.40" y="361.50" width="33.50" height="14.60" fill="#ffffff" />
<rect x="36.40" y="375.60" width="33.50" height="1.10" fill="#f2c811" />
<text x="45.50" y="371.22" font-size="5.7" fill="#252423" textLength="16.00" lengthAdjust="spacingAndGlyphs" >Seite 1</text>
<rect x="71.00" y="362.00" width="17.00" height="14.30" fill="#ecbf1c" />
<path d="M76.800 369.200h5.200M79.400 366.600v5.200" stroke="#252423" stroke-width="0.900"/>
<text x="2.20" y="384.42" font-size="5.7" fill="#444" textLength="30.00" lengthAdjust="spacingAndGlyphs" >Seite 1 von 1</text>
<g fill="#ffffff"><path d="M7 393.700l3.500-0.500v3.200h-3.500zM11 393.100l4.200-0.600v3.900h-4.200zM7 396.900h3.500v3.200l-3.500-0.500zM11 396.900h4.200v3.900l-4.200-0.600z"/></g>
<circle cx="33.200" cy="395.500" r="2.500" fill="none" stroke="#fff" stroke-width="0.900"/><path d="M31.400 397.300l-2.400 2.400" stroke="#fff" stroke-width="1"/>
<rect x="51" y="393.200" width="6" height="6.800" rx="0.800" fill="none" stroke="#fff" stroke-width="0.900"/><path d="M49.400 394.600v4M58.600 394.600v4" stroke="#fff" stroke-width="0.800"/>
<circle cx="77" cy="396.400" r="4.800" fill="#e33b2e"/><path d="M77 396.400l-4.160 2.400a4.800 4.800 0 0 0 4.160 2.400l2.200-3.800z" fill="#2da94f"/><path d="M77 396.400l2.200 1a4.800 4.800 0 0 0 2.600-1h0a4.800 4.800 0 0 0-0.640-2.400h-4.160z" fill="#fcc31e"/><path d="M81.160 394a4.800 4.800 0 0 1-4.160 7.200l2.300-4z" fill="#fcc31e"/><circle cx="77" cy="396.400" r="2.100" fill="#fff"/><circle cx="77" cy="396.400" r="1.600" fill="#4a8af4"/>
<circle cx="98.400" cy="396" r="4.300" fill="#2f86d6"/><path d="M96 393c1.500-0.800 3 0 2.600 1.400c-0.300 1-1.400 1-1.200 2.400c0.100 1-1 1.800-1.800 1.200c-0.900-0.800 0-2-0.600-3c-0.300-0.800 0.200-1.600 1-2z" fill="#6bc46d"/><rect x="99.400" y="396.400" width="4.600" height="4.200" fill="#f2f2f2" stroke="#7a8a99" stroke-width="0.400"/>
<path d="M116.400 393h4l1 1.200h5.600v6.200h-10.600z" fill="#f7c948"/><rect x="116.400" y="395.200" width="10.600" height="5.200" fill="#fbd965"/><rect x="119" y="397.400" width="5.400" height="3" fill="#3a9be0"/>
<rect x="137.200" y="391.600" width="9.400" height="9.400" rx="1.400" fill="#7ec242"/><path d="M139 393.200v6.200h6.200c-3.400-0.600-5.600-2.800-6.200-6.200z" fill="#f4f9ee"/>
<text x="150.00" y="398.19" font-size="5.6" fill="#ffffff" font-weight="bold" textLength="51.00" lengthAdjust="spacingAndGlyphs" >DATEV Arbeitsplatz ...</text>
<rect x="134.50" y="404.60" width="68.50" height="1.40" fill="#86a6c6" />
<rect x="206.40" y="404.60" width="40.00" height="1.40" fill="#86a6c6" />
<rect x="210.200" y="391.800" width="9.200" height="9" fill="#f4f4f4"/><rect x="210.200" y="391.800" width="9.200" height="2.800" fill="#d23a3a"/><path d="M212 396.600h5.600M212 398.600h5.600" stroke="#3a8a3a" stroke-width="1.100"/><path d="M213.600 395.400v5M216 395.400v5" stroke="#f4f4f4" stroke-width="0.500"/>
<text x="223.00" y="398.19" font-size="5.6" fill="#ffffff" font-weight="bold" textLength="17.40" lengthAdjust="spacingAndGlyphs" >12821 /</text>
<path d="M489.400 394.800h1.400l1.800-1.600v5.600l-1.800-1.600h-1.400z" fill="#e8e8e8"/><path d="M493.600 394.400a2.300 2.300 0 0 1 0 3.200M494.800 393.400a3.800 3.800 0 0 1 0 5.200" fill="none" stroke="#e8e8e8" stroke-width="0.500"/>
<rect x="500.60" y="392.60" width="6.80" height="6.80" fill="#f08a1c" />
<rect x="510.90" y="392.60" width="6.80" height="6.80" fill="#b04fb0" />
<rect x="522.60" y="392.60" width="6.80" height="6.80" fill="#3ea83e" />
<rect x="533.10" y="392.60" width="6.80" height="6.80" fill="#2a2a2a" />
<rect x="542.60" y="392.60" width="6.80" height="6.80" fill="#e6e6e6" />
<rect x="554.60" y="392.60" width="6.80" height="6.80" fill="#e6e6e6" />
<rect x="564.60" y="392.60" width="6.80" height="6.80" fill="#e6e6e6" />
<rect x="576.00" y="392.60" width="6.80" height="6.80" fill="#e8e8e8" />
<rect x="587.10" y="392.60" width="6.80" height="6.80" fill="#f0f0f0" />
<path d="M502.400 397.600l1-3l1.200 2l1-1.400" fill="none" stroke="#fff" stroke-width="0.700"/>
<circle cx="515.600" cy="397" r="1.800" fill="#f4f4f4"/><circle cx="513" cy="394.800" r="1.300" fill="#f0d0f0"/>
<path d="M524.600 394.400v3.600M527.400 394.400v3.600" stroke="#bff0bf" stroke-width="0.800"/>
<circle cx="536.500" cy="394.200" r="0.900" fill="#e03030"/><circle cx="536.500" cy="396" r="0.900" fill="#e8c020"/><circle cx="536.500" cy="397.800" r="0.900" fill="#30c030"/>
<rect x="543.8" y="393.800" width="2.600" height="2" fill="#3a8a3a"/><rect x="545.8" y="396.200" width="2.400" height="2.200" fill="#d09030"/><path d="M543.6 397.600h2M546.6 394.600h1.800" stroke="#555" stroke-width="0.500"/>
<rect x="555.8" y="393.800" width="2.600" height="2" fill="#3a8a3a"/><rect x="557.8" y="396.200" width="2.400" height="2.200" fill="#d09030"/><path d="M555.6 397.600h2M558.6 394.600h1.800" stroke="#555" stroke-width="0.500"/>
<rect x="565.800" y="394" width="4.400" height="4.400" fill="#2f8a3a"/><path d="M567 397.600l1-2.600l1 2.600" stroke="#fff" stroke-width="0.500" fill="none"/>
<path d="M577 394l4 1.400l1.600 3l-3.400-0.600z" fill="#d03030"/><path d="M578 397l3 1.600" stroke="#555" stroke-width="0.700"/>
<path d="M588.400 393.800v4.800M590 393.800l1.200 4.800l1.200-4.800" stroke="#222" stroke-width="0.800" fill="none"/><path d="M592.600 393.600l0.800 1" stroke="#d03030" stroke-width="0.700"/>
<text x="613.00" y="393.85" font-size="5.2" fill="#ffffff" text-anchor="middle" font-weight="bold" textLength="12.50" lengthAdjust="spacingAndGlyphs" >10:56</text>
<text x="610.90" y="402.15" font-size="5.2" fill="#ffffff" text-anchor="middle" font-weight="bold" textLength="25.70" lengthAdjust="spacingAndGlyphs" >23.12.2020</text>
<path d="M631.800 392.800h7.600v5.600h-2v1.800l-1.800-1.800h-3.800z" fill="none" stroke="#fff" stroke-width="0.800"/>
<line x1="647.60" y1="388.00" x2="647.60" y2="406.00" stroke="#6d8296" stroke-width="0.6" />
<defs>
<filter id="soft" x="-5%" y="-5%" width="110%" height="110%"><feGaussianBlur stdDeviation="0.5"/></filter>
<filter id="soft2" x="-30%" y="-30%" width="160%" height="160%"><feGaussianBlur stdDeviation="1.5"/></filter>
<linearGradient id="skin" x1="0" y1="0" x2="0" y2="1"><stop offset="0" stop-color="#dfc0ae"/><stop offset="0.4" stop-color="#d0a893"/><stop offset="0.7" stop-color="#b98d78"/><stop offset="1" stop-color="#94695a"/></linearGradient>
<linearGradient id="hair" x1="0.3" y1="0" x2="0.45" y2="1"><stop offset="0" stop-color="#251d1a"/><stop offset="0.6" stop-color="#33271f"/><stop offset="0.85" stop-color="#4b3a31"/><stop offset="1" stop-color="#6a5548"/></linearGradient>
<clipPath id="faceclip"><path d="M314.500 316c-0.700 3.500-0.700 7-0.400 10.500c0.200 3 0.600 5.500 1 8c0.500 2.500 1 4.600 1.700 6.800c0.800 2.200 1.700 4.200 3 6.200c1.200 1.800 2.700 3.500 4.500 5c1.800 1.400 3.800 2.500 6 3c2 0.500 4 0.700 6 0.500c1.800-0.300 3.400-1 5-2.200c1.600-1.300 3-3 4-5c1.200-2.200 2-4.500 2.700-7c0.800-2.800 1.300-5.600 1.700-8.500c0.300-3 0.500-6 0.500-9c0-3-0.200-6.200-0.700-9.300l-0.500-8l-16-4l-15 1z"/></clipPath>
</defs>
<g filter="url(#soft)">
<path d="M236.500 407c3-6 7-13 12.500-20c3-7 7-13 12.700-17c2.500-5 5.500-9.500 9.300-12.500c4-3.500 8-6 12.400-7.700c9-3.500 20-5 29-7.300l33 3.500c8 3 17 7 24 13c6 6 9.500 14 11.500 22c3 10 5.500 20 7 34z" fill="#131316"/>
<path d="M262 372c8-6 15-10 22-12M372 366c-6-5-12-8-19-10" stroke="#26262b" stroke-width="2" fill="none" opacity="0.600"/>
<path d="M314.500 331l3 14l12 16l13-10l5-14z" fill="#9c7262"/>
<path d="M311.400 341.200l3.600-1.400l3.800 7.200l5.600 7l6.400 5.200h5.600l3-2.400l3.400-3.600l-1.400 5l-4.400 5h-8.600l-4.400-2l-5.600-5.600l-4.400-6.600z" fill="#cc2d60"/>
<path d="M326 360.400l4.400 1.600h6.200l2.400-2.600l-1.600 6.600h-8z" fill="#363f58"/>
<path d="M313.600 318.200c-2.600-2-5.800-1.200-6 2c-0.200 3.800 1.600 8.400 4 10.800c1 1 2.200 0.800 2.600-0.200z" fill="#c59b88"/><path d="M309.600 321c1.600 0.800 2.400 3 2 5.600" stroke="#a07664" stroke-width="0.800" fill="none"/>
<g clip-path="url(#faceclip)">
<rect x="308" y="300" width="50" height="60" fill="url(#skin)"/>
<ellipse cx="331" cy="313" rx="12" ry="6" fill="#e6cbb9" opacity="0.700" filter="url(#soft2)"/>
<ellipse cx="346" cy="336" rx="4" ry="7" fill="#dcb9a5" opacity="0.600" filter="url(#soft2)"/>
<ellipse cx="321" cy="335" rx="4" ry="6" fill="#d6b09c" opacity="0.500" filter="url(#soft2)"/>
<path d="M315 338c3 6 7 10.500 12 13.500c4 2 8 2.500 11 1c3.500-2 6-6 8.500-11l1 8l-10 9h-12l-10-10z" fill="#7f5a4c" opacity="0.800" filter="url(#soft2)"/>
<path d="M318 324h16M340 324.500h11" stroke="#8a6252" stroke-width="4" opacity="0.450" filter="url(#soft2)"/>
</g>
<path d="M321.600 322.800c3.600-1.600 7.800-1.600 11.600 0.400" stroke="#4a372e" stroke-width="1.300" fill="none"/><path d="M342.400 323.400c2.600-1.200 5.600-1.200 8.200 0.200" stroke="#4a372e" stroke-width="1.200" fill="none"/>
<path d="M323.600 326.600c2.800 1.200 6 1.200 9 0.200" stroke="#2a1d18" stroke-width="1.500" fill="none"/><path d="M343.200 326.800c2.200 1 4.600 1 6.800 0.200" stroke="#2a1d18" stroke-width="1.400" fill="none"/>
<path d="M338.600 326c0.600 5 1.800 9.600 1.600 13.600c-1.600 1.600-4.600 1.800-6.400 0.400" stroke="#9c6f5c" stroke-width="1.200" fill="none"/>
<path d="M333 340.600c2 1 4.600 1 6.800-0.200" stroke="#7a5244" stroke-width="1" fill="none"/>
<path d="M331.600 345.200c3.200 1 6.800 1 10-0.200" stroke="#86504a" stroke-width="1.400" fill="none"/>
<path d="M314.600 321c-1.600-2.600-2.800-6-3.400-9.600c-0.600-3.200-0.600-6.400 0-9.400c0.600-2.800 1.800-5.200 3.400-7.400c1.400-1.800 3.200-3.400 5-4.600c1.800-1.200 3.800-2.200 6-3c2-0.800 4-1.800 6-2.200c2.200-0.400 4.600-0.400 6.800 0c2.400 0.400 4.800 1.200 7 2.600c2.200 1.400 4.200 3.200 5.600 5.400c1.600 2.400 2.600 5 3.200 7.800c0.400 2.600 0.400 5.200 0.200 7.800c-0.200 2.400-0.600 4.800-1.200 7c-0.400 1.800-0.800 3.600-1.600 5.200c-0.400-2.600-0.800-5.200-1.400-7.600c-0.400-1.800-1-3.600-1.800-5.200c-2-0.800-4.200-1.400-6.400-1.800c-2.800-0.400-5.600-0.600-8.400-0.600c-2.800 0-5.400 0.200-8 0.800c-1.400 0.200-2.800 0.200-4 0.600c-0.800 2-1.800 3.800-2.600 5.800c-0.800 2.200-1.600 4.400-2.200 6.600c-0.600 1.400-1.200 1.600-2.200 1.800z" fill="url(#hair)"/>
<path d="M318 289.500l2.400-2.200l1.800 1l3-2.600l2 1.200l3.600-2.400l2.200 1.400l3.600-1.800l2.200 1.600l3.200-1l1.800 2l2.800-0.400l1 2.600l2.400 0.800l-0.400 3.600l-18 2z" fill="#2b221f"/>
<path d="M319 295c4-4 9-6 15-5.600M325 299c5-3.600 12-3.800 18.600-1.400M314.600 304c1.600-3 3.600-5.400 6.400-7M340 290c4 1 8 4 10 8" stroke="#574438" stroke-width="1" fill="none" opacity="0.800"/>
</g>
</svg>
</div>
</body>
</html>
